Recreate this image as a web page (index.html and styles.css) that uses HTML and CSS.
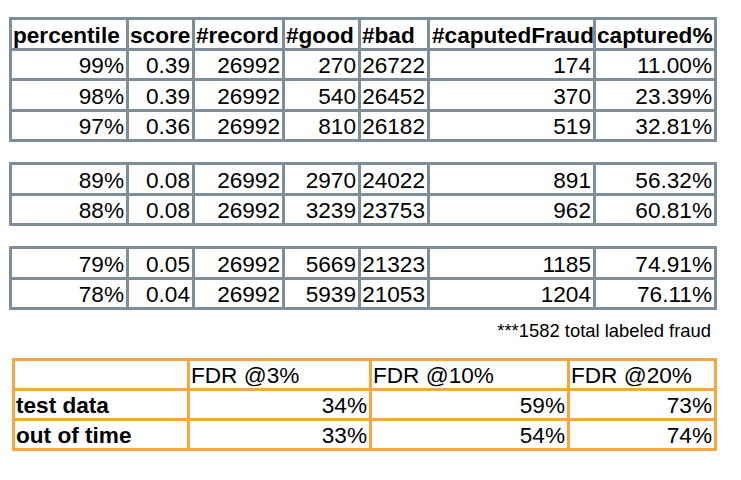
FILE: index.html
```html
<!DOCTYPE html>
<html lang="en">
<head>
<meta charset="utf-8">
<title>Fraud capture by percentile</title>
<link rel="stylesheet" href="styles.css">
</head>
<body>
<div class="page">
  <table class="grid">
    <tr>
      <th>percentile</th><th>score</th><th>#record</th><th>#good</th><th>#bad</th><th>#caputedFraud</th><th>captured%</th>
    </tr>
    <tr><td>99%</td><td>0.39</td><td>26992</td><td>270</td><td>26722</td><td>174</td><td>11.00%</td></tr>
    <tr><td>98%</td><td>0.39</td><td>26992</td><td>540</td><td>26452</td><td>370</td><td>23.39%</td></tr>
    <tr><td>97%</td><td>0.36</td><td>26992</td><td>810</td><td>26182</td><td>519</td><td>32.81%</td></tr>
  </table>

  <table class="grid">
    <tr><td>89%</td><td>0.08</td><td>26992</td><td>2970</td><td>24022</td><td>891</td><td>56.32%</td></tr>
    <tr><td>88%</td><td>0.08</td><td>26992</td><td>3239</td><td>23753</td><td>962</td><td>60.81%</td></tr>
  </table>

  <table class="grid">
    <tr><td>79%</td><td>0.05</td><td>26992</td><td>5669</td><td>21323</td><td>1185</td><td>74.91%</td></tr>
    <tr><td>78%</td><td>0.04</td><td>26992</td><td>5939</td><td>21053</td><td>1204</td><td>76.11%</td></tr>
  </table>

  <p class="note">***1582 total labeled fraud</p>

  <table class="fdr">
    <tr><th></th><th>FDR @3%</th><th>FDR @10%</th><th>FDR @20%</th></tr>
    <tr><th>test data</th><td>34%</td><td>59%</td><td>73%</td></tr>
    <tr><th>out of time</th><td>33%</td><td>54%</td><td>74%</td></tr>
  </table>
</div>
</body>
</html>
```

FILE: styles.css
```css
html, body {
  margin: 0;
  padding: 0;
  background: #ffffff;
}

.page {
  padding: 17px 0 0 9px;
  font-family: "Liberation Sans", Arial, sans-serif;
  color: #000000;
}

table {
  box-sizing: border-box;
  border-collapse: separate;
  border-spacing: 0;
  table-layout: fixed;
}

th, td {
  box-sizing: border-box;
  padding: 0 2px 0 1px;
  font-size: 22.6px;
  line-height: 24px;
  vertical-align: bottom;
  white-space: nowrap;
  overflow: hidden;
}

/* gray data tables */
.grid {
  width: 708px;
  border-top: 3px solid #7d8e98;
  border-left: 3px solid #7d8e98;
  margin-bottom: 20px;
}

.grid th, .grid td {
  height: 30.5px;
  border-right: 3px solid #7d8e98;
  border-bottom: 3px solid #7d8e98;
}

.grid th {
  font-weight: bold;
  text-align: left;
}

.grid td {
  text-align: right;
}

.grid th:nth-child(1), .grid td:nth-child(1) { width: 117px; }
.grid th:nth-child(2), .grid td:nth-child(2) { width: 66px; }
.grid th:nth-child(3), .grid td:nth-child(3) { width: 90px; }
.grid th:nth-child(4), .grid td:nth-child(4) { width: 76px; }
.grid th:nth-child(5), .grid td:nth-child(5) { width: 69px; }
.grid th:nth-child(6), .grid td:nth-child(6) { width: 166px; }
.grid th:nth-child(7), .grid td:nth-child(7) { width: 121px; }

.grid th:nth-child(6) { padding-left: 2px; }

.grid + .grid + .grid {
  margin-bottom: 0;
}

.note {
  width: 708px;
  box-sizing: border-box;
  margin: 11px 0 0 0;
  padding-right: 6px;
  text-align: right;
  font-size: 18.4px;
  line-height: 20px;
}

/* orange FDR table */
.fdr {
  width: 705px;
  margin: 17px 0 0 3px;
  border-top: 3px solid #f9a540;
  border-left: 3px solid #f9a540;
}

.fdr th, .fdr td {
  height: 30px;
  border-right: 3px solid #f9a540;
  border-bottom: 3px solid #f9a540;
}

.fdr tr:first-child th {
  font-weight: normal;
  text-align: left;
}

.fdr th {
  font-weight: bold;
  text-align: left;
}

.fdr td {
  text-align: right;
}

.fdr th:nth-child(1), .fdr td:nth-child(1) { width: 175px; }
.fdr th:nth-child(2), .fdr td:nth-child(2) { width: 182px; }
.fdr th:nth-child(3), .fdr td:nth-child(3) { width: 198px; }
.fdr th:nth-child(4), .fdr td:nth-child(4) { width: 147px; }
```
